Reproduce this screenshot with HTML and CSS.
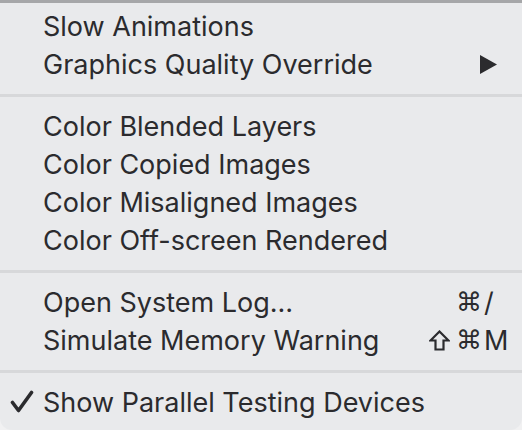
FILE: index.html
```html
<!DOCTYPE html>
<html>
<head>
<meta charset="utf-8">
<link rel="stylesheet" href="styles.css">
</head>
<body>
<div class="menu">
  <div class="item"><span class="label">Slow Animations</span></div>
  <div class="item"><span class="label">Graphics Quality Override</span>
    <svg class="arrow" width="17" height="19" viewBox="0 0 17 19"><polygon points="0,0 17,9.5 0,19" fill="#2b2b2e"/></svg>
  </div>
  <div class="sep"></div>
  <div class="item"><span class="label">Color Blended Layers</span></div>
  <div class="item"><span class="label">Color Copied Images</span></div>
  <div class="item"><span class="label">Color Misaligned Images</span></div>
  <div class="item"><span class="label">Color Off-screen Rendered</span></div>
  <div class="sep"></div>
  <div class="item"><span class="label">Open System Log…</span>
    <span class="shortcut"><span class="mods">⌘</span><span class="key">/</span></span>
  </div>
  <div class="item"><span class="label">Simulate Memory Warning</span>
    <span class="shortcut"><span class="mods"><svg class="shift" width="21" height="21" viewBox="0 0 21 21"><path d="M10.5 1.5 L19.5 10.5 L14.5 10.5 L14.5 19.5 L6.5 19.5 L6.5 10.5 L1.5 10.5 Z" fill="none" stroke="#2b2b2e" stroke-width="2.2" stroke-linejoin="miter"/></svg>⌘</span><span class="key">M</span></span>
  </div>
  <div class="sep"></div>
  <div class="item">
    <svg class="check" width="24" height="24" viewBox="0 0 24 24"><path d="M2.5 12.5 L8.5 20.5 L21.5 2.5" fill="none" stroke="#2b2b2e" stroke-width="3.6" stroke-linecap="round" stroke-linejoin="round"/></svg>
    <span class="label">Show Parallel Testing Devices</span></div>
</div>
</body>
</html>
```
FILE: styles.css
```css
html, body {
  margin: 0;
  padding: 0;
  background: #f1f1f2;
}
.menu {
  box-sizing: border-box;
  width: 522px;
  height: 430px;
  background: #e9eaec;
  border-top: 3px solid #a6a7a9;
  border-bottom-left-radius: 12px;
  border-bottom-right-radius: 12px;
  padding: 4px 0 9px;
  font-family: Inter, "Liberation Sans", sans-serif;
  font-size: 27px;
  color: #2b2b2e;
}
.item {
  position: relative;
  height: 38px;
  display: flex;
  align-items: center;
  padding: 0 12px 0 43px;
}
.label {
  white-space: nowrap;
}
.sep {
  height: 3px;
  background: #d7d8da;
  margin: 11px 0 10px;
}
.arrow {
  margin-left: auto;
  margin-right: 13px;
}
.shortcut {
  margin-left: auto;
  display: flex;
  align-items: center;
}
.mods {
  display: flex;
  align-items: center;
  font-family: "DejaVu Sans", sans-serif;
  font-size: 26px;
}
.shift {
  margin-right: 6px;
}
.key {
  width: 26px;
  padding-left: 2px;
}
.check {
  position: absolute;
  left: 10px;
  top: 7px;
}
```
